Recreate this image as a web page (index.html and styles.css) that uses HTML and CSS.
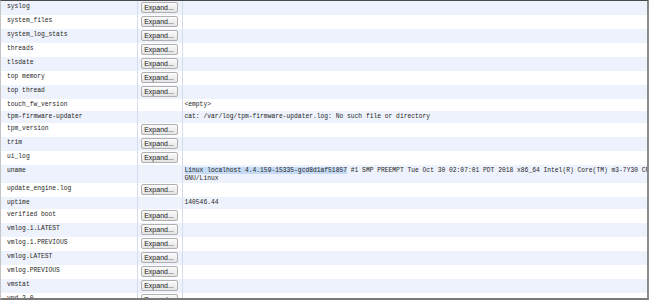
FILE: index.html
```html
<!DOCTYPE html>
<html>
<head>
<meta charset="utf-8">
<link rel="stylesheet" href="styles.css">
</head>
<body>
<div class="frame">
<table class="logs">
<colgroup><col class="c-name"><col class="c-btn"><col class="c-val"></colgroup>
<tbody>
<tr class="odd"><td class="name">syslog</td><td class="btn"><button>Expand...</button></td><td class="val"></td></tr>
<tr><td class="name">system_files</td><td class="btn"><button>Expand...</button></td><td class="val"></td></tr>
<tr class="odd"><td class="name">system_log_stats</td><td class="btn"><button>Expand...</button></td><td class="val"></td></tr>
<tr><td class="name">threads</td><td class="btn"><button>Expand...</button></td><td class="val"></td></tr>
<tr class="odd"><td class="name">tlsdate</td><td class="btn"><button>Expand...</button></td><td class="val"></td></tr>
<tr><td class="name">top memory</td><td class="btn"><button>Expand...</button></td><td class="val"></td></tr>
<tr class="odd"><td class="name">top thread</td><td class="btn"><button>Expand...</button></td><td class="val"></td></tr>
<tr><td class="name">touch_fw_version</td><td class="btn"></td><td class="val">&lt;empty&gt;</td></tr>
<tr class="odd"><td class="name">tpm-firmware-updater</td><td class="btn"></td><td class="val">cat: /var/log/tpm-firmware-updater.log: No such file or directory</td></tr>
<tr><td class="name">tpm_version</td><td class="btn"><button>Expand...</button></td><td class="val"></td></tr>
<tr class="odd"><td class="name">trim</td><td class="btn"><button>Expand...</button></td><td class="val"></td></tr>
<tr><td class="name">ui_log</td><td class="btn"><button>Expand...</button></td><td class="val"></td></tr>
<tr class="odd"><td class="name">uname</td><td class="btn"></td><td class="val two"><span class="sel">Linux localhost 4.4.159-15335-gcd8d1af51857</span> #1 SMP PREEMPT Tue Oct 30 02:07:01 PDT 2018 x86_64 Intel(R) Core(TM) m3-7Y30 CPU @ 1.00GHz GenuineIntel<br>GNU/Linux</td></tr>
<tr><td class="name">update_engine.log</td><td class="btn"><button>Expand...</button></td><td class="val"></td></tr>
<tr class="odd"><td class="name">uptime</td><td class="btn"></td><td class="val">140546.44</td></tr>
<tr><td class="name">verified boot</td><td class="btn"><button>Expand...</button></td><td class="val"></td></tr>
<tr class="odd"><td class="name">vmlog.1.LATEST</td><td class="btn"><button>Expand...</button></td><td class="val"></td></tr>
<tr><td class="name">vmlog.1.PREVIOUS</td><td class="btn"><button>Expand...</button></td><td class="val"></td></tr>
<tr class="odd"><td class="name">vmlog.LATEST</td><td class="btn"><button>Expand...</button></td><td class="val"></td></tr>
<tr><td class="name">vmlog.PREVIOUS</td><td class="btn"><button>Expand...</button></td><td class="val"></td></tr>
<tr class="odd"><td class="name">vmstat</td><td class="btn"><button>Expand...</button></td><td class="val"></td></tr>
<tr><td class="name">vpd_2.0</td><td class="btn"><button>Expand...</button></td><td class="val"></td></tr>
</tbody>
</table>
</div>
</body>
</html>
```

FILE: styles.css
```css
html, body {
  margin: 0;
  padding: 0;
  background: #ffffff;
}
.frame {
  width: 649px;
  height: 300px;
  box-sizing: border-box;
  border-top: 1px solid #4a4a4a;
  border-right: 2px solid #8a8a8a;
  border-bottom: 2px solid #7a7a7a;
  border-left: 1px solid #c4c4c4;
  overflow: hidden;
}
.logs {
  border-collapse: collapse;
  table-layout: fixed;
  width: 1000px;
  font-family: "Liberation Mono", "DejaVu Sans Mono", monospace;
  font-size: 6.3px;
  line-height: 6px;
  color: #262626;
}
.c-name { width: 136px; }
.c-btn { width: 45px; }
.c-val { width: 819px; }
.logs tr.odd { background: #eef2fc; }
.logs td {
  vertical-align: top;
  padding: 3px 0 3px 0;
}
.logs td.name {
  padding-left: 6px;
  border-right: 1px solid #d6dcef;
  white-space: nowrap;
}
.logs td.btn {
  padding: 1px 0 2px 3px;
  border-right: 1px solid #d6dcef;
}
.logs td.val {
  padding-left: 2px;
  white-space: nowrap;
}
.logs td.val.two {
  line-height: 8px;
  padding: 2px 0 0 2px;
}
.logs button {
  display: block;
  width: 37px;
  height: 11px;
  margin: 0;
  padding: 0;
  box-sizing: border-box;
  border: 1px solid #b0b0b0;
  border-radius: 2px;
  background: linear-gradient(#fbfbfb, #e4e4e4);
  font-family: "Liberation Sans", Arial, sans-serif;
  font-size: 7px;
  line-height: 9px;
  color: #222222;
  text-align: center;
}
.sel {
  background: #c5daf4;
}
```
